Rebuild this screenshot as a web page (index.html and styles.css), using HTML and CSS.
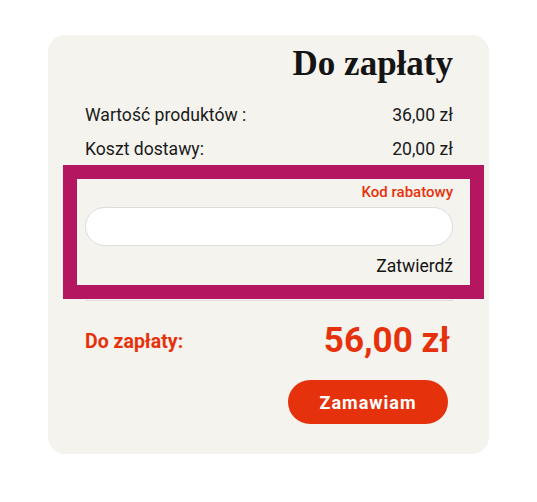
FILE: index.html
```html
<!DOCTYPE html>
<html lang="pl">
<head>
    <meta charset="UTF-8">
    <meta name="viewport" content="width=device-width, initial-scale=1.0">
    <title>Do zapłaty</title>
    <link rel="stylesheet" href="styles.css">
</head>
<body>
    <div class="summary">
        <h2 class="summary-title">Do zapłaty</h2>

        <div class="row">
            <span>Wartość produktów :</span>
            <span>36,00 zł</span>
        </div>
        <div class="row">
            <span>Koszt dostawy:</span>
            <span>20,00 zł</span>
        </div>

        <!-- Discount code -->
        <div class="promo">
            <label for="promoInput" class="promo-label">Kod rabatowy</label>
            <input type="text" id="promoInput" class="promo-input">
            <button class="promo-submit">Zatwierdź</button>
        </div>
        <div class="divider"></div>

        <div class="total">
            <span class="total-label">Do zapłaty:</span>
            <span class="total-price">56,00 zł</span>
        </div>

        <div class="actions">
            <button class="order-btn">Zamawiam</button>
        </div>
    </div>
</body>
</html>
```

FILE: styles.css
```css
body {
    font-family: Roboto, "Liberation Sans", sans-serif;
    background-color: #ffffff;
    color: #1a1a1a;
    margin: 0;
    padding: 35px 0 0 0;
}

.summary {
    width: 441px;
    box-sizing: border-box;
    margin: 0 auto;
    padding: 7px 36px 30px 37px;
    background: #f4f3ee;
    border-radius: 17px;
}

.summary-title {
    font-family: "Liberation Serif", serif;
    font-weight: bold;
    font-size: 35px;
    line-height: 44px;
    text-align: right;
    margin: 0 0 17px 0;
    color: #141414;
}

.row {
    display: flex;
    justify-content: space-between;
    font-size: 17.6px;
    line-height: 24px;
}

.row + .row {
    margin-top: 10px;
}

.promo {
    display: flex;
    flex-direction: column;
    align-items: flex-end;
    margin: 4px -31px 0 -22px;
    padding: 3px 17px 7px 8px;
    border: 14px solid #b41660;
}

.promo-label {
    font-size: 15px;
    font-weight: 500;
    line-height: 20px;
    color: #e6320c;
}

.promo-input {
    width: 100%;
    box-sizing: border-box;
    height: 39px;
    margin-top: 5px;
    padding: 0 18px;
    border: 1px solid #dcdcdc;
    border-radius: 20px;
    background: #ffffff;
    font-size: 16px;
}

.promo-submit {
    margin-top: 8px;
    padding: 0;
    border: none;
    background: none;
    font-family: inherit;
    font-size: 17.5px;
    line-height: 24px;
    color: #141414;
    cursor: pointer;
}

.divider {
    height: 1px;
    margin-top: 1px;
    background: #e2dcdc;
}

.total {
    display: flex;
    justify-content: space-between;
    align-items: center;
    margin-top: 20px;
    color: #e6320c;
    font-weight: bold;
}

.total-label {
    font-size: 19.5px;
}

.total-price {
    font-size: 35px;
    line-height: 40px;
    padding-right: 3px;
}

.actions {
    display: flex;
    justify-content: flex-end;
    margin-top: 19px;
    padding-right: 5px;
}

.order-btn {
    width: 160px;
    height: 44px;
    border: none;
    border-radius: 22px;
    background: #e6320c;
    color: #ffffff;
    font-family: inherit;
    font-size: 18px;
    font-weight: bold;
    letter-spacing: 1px;
    cursor: pointer;
}
```
